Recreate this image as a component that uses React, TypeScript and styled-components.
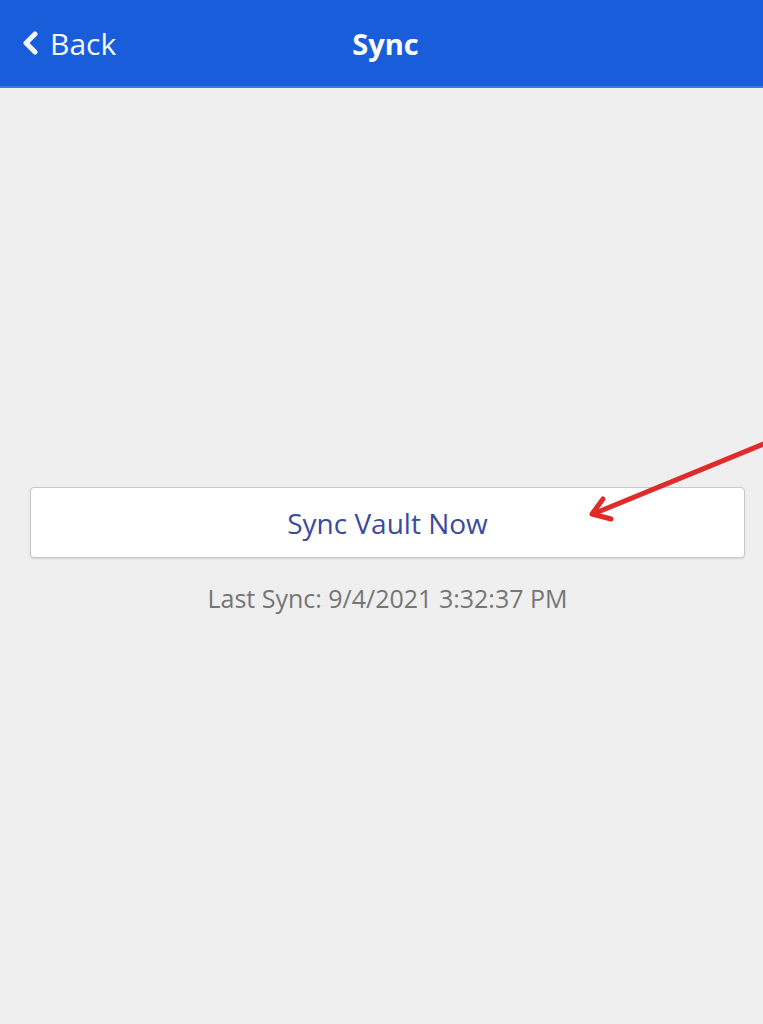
import styled, { createGlobalStyle } from "styled-components";

const GlobalStyle = createGlobalStyle`
  html, body {
    margin: 0;
    padding: 0;
    background: #efefef;
  }
  body {
    font-family: "Open Sans", "Noto Sans", sans-serif;
  }
`;

const Page = styled.div`
  position: relative;
  width: 763px;
  min-height: 1024px;
  background: #efefef;
  overflow: hidden;
`;

const Header = styled.header`
  height: 86px;
  background: #1a5ddb;
  border-bottom: 2px solid #3b78e4;
  display: grid;
  grid-template-columns: 1fr auto 1fr;
  align-items: center;
  padding: 0 14px 0 22px;
  color: #fff;
`;

const BackLink = styled.div`
  display: flex;
  align-items: center;
  gap: 11px;
  font-size: 30px;
  color: #f4f8ff;
  svg {
    width: 17px;
    height: 24px;
  }
`;

const Title = styled.h1`
  margin: 0;
  font-size: 29px;
  font-weight: 700;
  color: #fff;
`;

const Content = styled.main`
  padding: 399px 18px 0 30px;
  display: flex;
  flex-direction: column;
  align-items: center;
  gap: 23px;
`;

const SyncButton = styled.button`
  width: 100%;
  height: 71px;
  background: #fff;
  border: 1px solid #c9c9c9;
  border-radius: 4px;
  box-shadow: 0 1px 2px rgba(0, 0, 0, 0.12);
  font-family: "Open Sans", "Noto Sans", sans-serif;
  font-size: 28px;
  color: #3b4b9c;
  cursor: pointer;
`;

const LastSync = styled.p`
  margin: 0;
  font-size: 25px;
  color: #767676;
`;

const Annotation = styled.svg`
  position: absolute;
  left: 0;
  top: 0;
  width: 763px;
  height: 1024px;
  pointer-events: none;
`;

export default function App() {
  return (
    <Page>
      <GlobalStyle />
      <Header>
        <BackLink>
          <svg viewBox="0 0 17 24">
            <path
              d="M13 3 L4 12 L13 21"
              fill="none"
              stroke="#f4f8ff"
              strokeWidth="5"
              strokeLinecap="round"
              strokeLinejoin="round"
            />
          </svg>
          Back
        </BackLink>
        <Title>Sync</Title>
        <div />
      </Header>
      <Content>
        <SyncButton>Sync Vault Now</SyncButton>
        <LastSync>Last Sync: 9/4/2021 3:32:37 PM</LastSync>
      </Content>
      <Annotation viewBox="0 0 763 1024">
        <g
          fill="none"
          stroke="#e02b2b"
          strokeWidth="5"
          strokeLinecap="round"
          strokeLinejoin="round"
        >
          <path d="M766 443 L593 514" />
          <path d="M603 499 L592 514 L611 519" />
        </g>
      </Annotation>
    </Page>
  );
}
